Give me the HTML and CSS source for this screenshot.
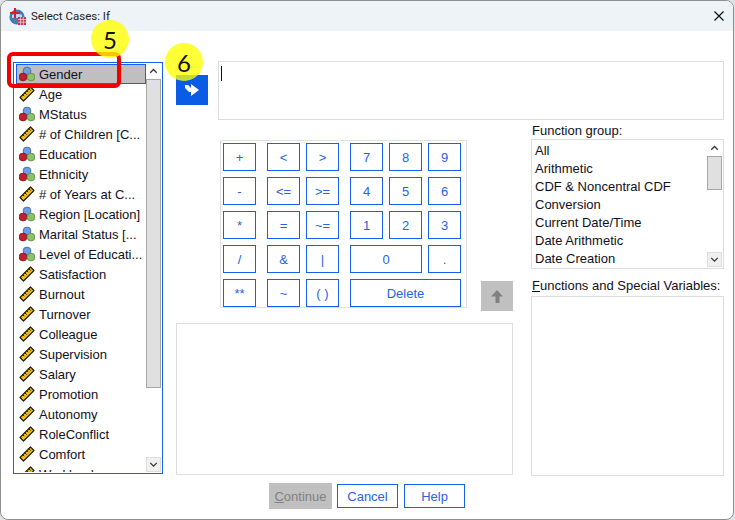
FILE: index.html
```html
<!DOCTYPE html>
<html lang="en">
<head>
<meta charset="utf-8">
<title>Select Cases: If</title>
<link rel="stylesheet" href="styles.css">
</head>
<body>
<svg class="defs" width="0" height="0" aria-hidden="true">
  <symbol id="nominal" viewBox="0 0 16 16">
    <circle cx="8" cy="5" r="3.900" fill="#6f9fe0" stroke="#3565b0" stroke-width=".8"/>
    <circle cx="4" cy="11" r="3.900" fill="#c2202f" stroke="#7d1520" stroke-width=".8"/>
    <circle cx="12" cy="11" r="3.900" fill="#8cc26a" stroke="#5b8a3e" stroke-width=".8"/>
  </symbol>
  <symbol id="scale" viewBox="0 0 16 16">
    <path d="M1 11.500 11.500 1 15 4.500 4.500 15z" fill="#f4c20d" stroke="#1c1c1c" stroke-width="1.200" stroke-linejoin="round"/>
    <path d="m3.800 8.700 1.500 1.500M5.800 6.700l2 2M7.800 4.700l1.500 1.500M9.800 2.700l2 2" stroke="#1c1c1c" stroke-width="1" fill="none"/>
  </symbol>
  <symbol id="up" viewBox="0 0 16 16"><path d="m4 9.500 4-4 4 4" fill="none" stroke="#333" stroke-width="1.600"/></symbol>
  <symbol id="down" viewBox="0 0 16 16"><path d="m4 6 4 4 4-4" fill="none" stroke="#333" stroke-width="1.600"/></symbol>
</svg>
<div class="window">
  <header class="titlebar">
    <svg class="appicon" width="17" height="17" viewBox="0 0 17 17">
      <circle cx="8" cy="9" r="7.600" fill="#3f7fb5"/>
      <path d="M3 7q5-3 10 0v3H3z" fill="#bcd6ea"/>
      <path d="M5 0h2v4h4v2H7v4H5V6H1V4h4z" fill="#d3202f"/>
      <rect x="9" y="9" width="8" height="8" fill="#c8324a"/>
      <path d="M9 11.500h8M9 14.200h8M11.600 9v8M14.300 9v8" stroke="#f6d5da" stroke-width=".8"/>
    </svg>
    <span class="title">Select Cases: If</span>
    <svg class="close" width="10" height="10" viewBox="0 0 10 10"><path d="m.5.500 9 9m0-9-9 9" stroke="#111" stroke-width="1.200"/></svg>
  </header>
  <div class="body">
    <div class="varlist">
      <ul class="vars">
        <li class="var selected"><svg class="ico"><use href="#nominal"/></svg>Gender</li>
        <li class="var"><svg class="ico"><use href="#scale"/></svg>Age</li>
        <li class="var"><svg class="ico"><use href="#nominal"/></svg>MStatus</li>
        <li class="var"><svg class="ico"><use href="#scale"/></svg># of Children [C...</li>
        <li class="var"><svg class="ico"><use href="#nominal"/></svg>Education</li>
        <li class="var"><svg class="ico"><use href="#nominal"/></svg>Ethnicity</li>
        <li class="var"><svg class="ico"><use href="#scale"/></svg># of Years at C...</li>
        <li class="var"><svg class="ico"><use href="#nominal"/></svg>Region [Location]</li>
        <li class="var"><svg class="ico"><use href="#nominal"/></svg>Marital Status [...</li>
        <li class="var"><svg class="ico"><use href="#nominal"/></svg>Level of Educati...</li>
        <li class="var"><svg class="ico"><use href="#scale"/></svg>Satisfaction</li>
        <li class="var"><svg class="ico"><use href="#scale"/></svg>Burnout</li>
        <li class="var"><svg class="ico"><use href="#scale"/></svg>Turnover</li>
        <li class="var"><svg class="ico"><use href="#scale"/></svg>Colleague</li>
        <li class="var"><svg class="ico"><use href="#scale"/></svg>Supervision</li>
        <li class="var"><svg class="ico"><use href="#scale"/></svg>Salary</li>
        <li class="var"><svg class="ico"><use href="#scale"/></svg>Promotion</li>
        <li class="var"><svg class="ico"><use href="#scale"/></svg>Autonomy</li>
        <li class="var"><svg class="ico"><use href="#scale"/></svg>RoleConflict</li>
        <li class="var"><svg class="ico"><use href="#scale"/></svg>Comfort</li>
        <li class="var"><svg class="ico"><use href="#scale"/></svg>Workload</li>
      </ul>
      <div class="scrollbar">
        <span class="sb-btn"><svg class="chev"><use href="#up"/></svg></span>
        <span class="sb-thumb sb-thumb-vars"></span>
        <span class="sb-rest"></span>
        <span class="sb-btn sb-btn-down"><svg class="chev"><use href="#down"/></svg></span>
      </div>
    </div>
    <div class="main">
      <div class="exprow">
        <button class="arrowbtn" type="button" aria-label="Move">
          <svg width="16" height="16" viewBox="0 0 16 16"><path d="M1 3h3l3 3V2l8 6-8 6v-4H5L1 6z" fill="#fff"/></svg>
        </button>
        <div class="expbox"><span class="caret"></span></div>
      </div>
      <div class="lower">
        <div class="center">
          <div class="calcrow">
            <div class="calc">
              <button class="key k1" type="button">+</button>
              <button class="key k2" type="button">&lt;</button>
              <button class="key k3" type="button">&gt;</button>
              <button class="key k4" type="button">7</button>
              <button class="key k5" type="button">8</button>
              <button class="key k6" type="button">9</button>
              <button class="key k1" type="button">-</button>
              <button class="key k2" type="button">&lt;=</button>
              <button class="key k3" type="button">&gt;=</button>
              <button class="key k4" type="button">4</button>
              <button class="key k5" type="button">5</button>
              <button class="key k6" type="button">6</button>
              <button class="key k1" type="button">*</button>
              <button class="key k2" type="button">=</button>
              <button class="key k3" type="button">~=</button>
              <button class="key k4" type="button">1</button>
              <button class="key k5" type="button">2</button>
              <button class="key k6" type="button">3</button>
              <button class="key k1" type="button">/</button>
              <button class="key k2" type="button">&amp;</button>
              <button class="key k3" type="button">|</button>
              <button class="key k4-5" type="button">0</button>
              <button class="key k6" type="button">.</button>
              <button class="key k1" type="button">**</button>
              <button class="key k2" type="button">~</button>
              <button class="key k3" type="button">( )</button>
              <button class="key k4-6" type="button">Delete</button>
            </div>
            <button class="upbtn" type="button" aria-label="Insert function">
              <svg width="12" height="13" viewBox="0 0 12 13"><path d="M6 0l6 6.500H8.500V13h-4V6.500H0z" fill="#808080"/></svg>
            </button>
          </div>
          <div class="resultbox"></div>
        </div>
        <div class="funcs">
          <div class="label">Function <u>g</u>roup:</div>
          <div class="grouplist">
            <ul class="groups">
              <li>All</li>
              <li>Arithmetic</li>
              <li>CDF &amp; Noncentral CDF</li>
              <li>Conversion</li>
              <li>Current Date/Time</li>
              <li>Date Arithmetic</li>
              <li>Date Creation</li>
            </ul>
            <div class="scrollbar">
              <span class="sb-btn"><svg class="chev"><use href="#up"/></svg></span>
              <span class="sb-thumb sb-thumb-groups"></span>
              <span class="sb-rest"></span>
              <span class="sb-btn sb-btn-down"><svg class="chev"><use href="#down"/></svg></span>
            </div>
          </div>
          <div class="label label-second"><u>F</u>unctions and Special Variables:</div>
          <div class="speclist"></div>
        </div>
      </div>
    </div>
  </div>
  <footer class="footer">
    <button class="action action-disabled" type="button"><u>C</u>ontinue</button>
    <button class="action" type="button">Cancel</button>
    <button class="action" type="button">Help</button>
  </footer>
  <div class="callout-box"></div>
  <div class="badge badge-5">5</div>
  <div class="badge badge-6">6</div>
</div>
</body>
</html>
```
FILE: styles.css
```css
* { box-sizing: border-box; }
html, body { margin: 0; padding: 0; }
body {
  width: 735px;
  height: 520px;
  background: #dfe3e6;
  font-family: "Liberation Sans", Arial, sans-serif;
  font-size: 13px;
  color: #10101c;
  overflow: hidden;
}
.defs { position: absolute; }
ul { list-style: none; margin: 0; padding: 0; }
button { font: inherit; padding: 0; margin: 0; background: #fff; }

.window {
  position: relative;
  width: 734px;
  height: 520px;
  background: #fff;
  border: 1px solid #8f8f8f;
  border-radius: 8px;
  overflow: hidden;
}
.titlebar {
  display: flex;
  align-items: center;
  height: 30px;
  padding: 0 9px 0 8px;
  background: #eef3f8;
}
.appicon { margin-right: 5px; }
.title { flex: 1; font-family: Roboto, sans-serif; font-size: 11.5px; color: #222; }

.body { display: flex; padding: 31px 0 0 12px; height: 443px; }

.varlist {
  display: flex;
  width: 150px;
  height: 412px;
  padding: 1px;
  border: 1px solid #1560f0;
}
.vars { flex: 1; min-width: 0; padding: 0 0 0 1px; overflow: hidden; }
.var {
  display: flex;
  align-items: center;
  height: 20px;
  padding-left: 3px;
  white-space: nowrap;
}
.ico { width: 16px; height: 16px; margin-right: 4px; flex: none; }
.selected {
  padding-left: 2px;
  background: #bfbfbf;
  border: 1px solid #1560f0;
}

.scrollbar { display: flex; flex-direction: column; width: 15px; flex: none; }
.sb-btn {
  display: flex;
  align-items: center;
  justify-content: center;
  height: 15px;
  flex: none;
  background: #fff;
}
.sb-btn-down { background: #f0f0f0; border: 1px solid #dcdcdc; }
.chev { width: 13px; height: 13px; }
.sb-thumb { background: #e0e0e0; border: 1px solid #a6a6a6; flex: none; }
.sb-thumb-vars { height: 309px; }
.sb-thumb-groups { height: 34px; }
.sb-rest { flex: 1; }

.main { width: 548px; margin: -1px 0 0 13px; }
.exprow { display: flex; align-items: flex-start; }
.arrowbtn {
  display: flex;
  align-items: center;
  justify-content: center;
  width: 32px;
  height: 30px;
  margin-top: 14px;
  background: #0a5be6;
  border: 0;
}
.expbox {
  width: 506px;
  height: 59px;
  margin-left: 10px;
  padding: 4px 2px;
  border: 1px solid #dddddd;
}
.caret { display: block; width: 1px; height: 15px; background: #111; }

.lower { display: flex; margin-top: 2px; }
.center { width: 337px; padding-top: 18px; }
.calcrow { display: flex; align-items: flex-start; padding-left: 44px; }
.calc {
  display: grid;
  grid-template-columns: 33px 11px 33px 6px 33px 11px 33px 6px 33px 6px 33px;
  grid-auto-rows: 28px;
  row-gap: 6px;
  width: 247px;
  height: 168px;
  padding: 2px;
  border: 1px solid #e0e0e0;
}
.key {
  border: 1px solid #1560f0;
  color: #2a62e6;
  font-size: 13px;
}
.k1 { grid-column: 1; }
.k2 { grid-column: 3; }
.k3 { grid-column: 5; }
.k4 { grid-column: 7; }
.k5 { grid-column: 9; }
.k6 { grid-column: 11; }
.k4-5 { grid-column: 7 / span 3; }
.k4-6 { grid-column: 7 / span 5; }
.upbtn {
  display: flex;
  align-items: center;
  justify-content: center;
  width: 32px;
  height: 30px;
  margin: 141px 0 0 14px;
  background: #c0c0c0;
  border: 0;
}
.resultbox {
  width: 337px;
  height: 152px;
  margin-top: 12px;
  border: 1px solid #dddddd;
}

.funcs { width: 193px; margin-left: 18px; }
.label { height: 17px; line-height: 17px; padding-left: 1px; white-space: nowrap; }
.label-second { margin-top: 8px; height: 19px; }
.grouplist {
  display: flex;
  height: 130px;
  padding: 1px;
  border: 1px solid #dddddd;
}
.groups { flex: 1; padding: 1px 0 0 2px; }
.groups li { height: 18px; line-height: 18px; white-space: nowrap; }
.speclist { height: 180px; border: 1px solid #dddddd; }

.footer {
  display: flex;
  align-items: center;
  margin-top: 9px;
  padding-left: 268px;
}
.action {
  width: 61px;
  height: 24px;
  margin-left: 6px;
  border: 1px solid #1560f0;
  color: #2a62e6;
  font-size: 13px;
}
.action-disabled {
  width: 63px;
  height: 26px;
  margin-left: 0;
  margin-right: -1px;
  background: #c0c0c0;
  border: 0;
  color: #808080;
}

.callout-box {
  position: absolute;
  left: 6px;
  top: 51px;
  width: 114px;
  height: 36px;
  border: 4px solid #f00000;
  border-radius: 6px;
}
.badge {
  position: absolute;
  display: flex;
  align-items: center;
  justify-content: center;
  width: 38px;
  height: 38px;
  border-radius: 50%;
  background: rgba(255, 255, 0, .78);
  font-family: Lato, sans-serif;
  font-size: 24px;
  color: #111;
}
.badge-5 { left: 90px; top: 19px; }
.badge-6 { left: 164px; top: 42px; }
```
